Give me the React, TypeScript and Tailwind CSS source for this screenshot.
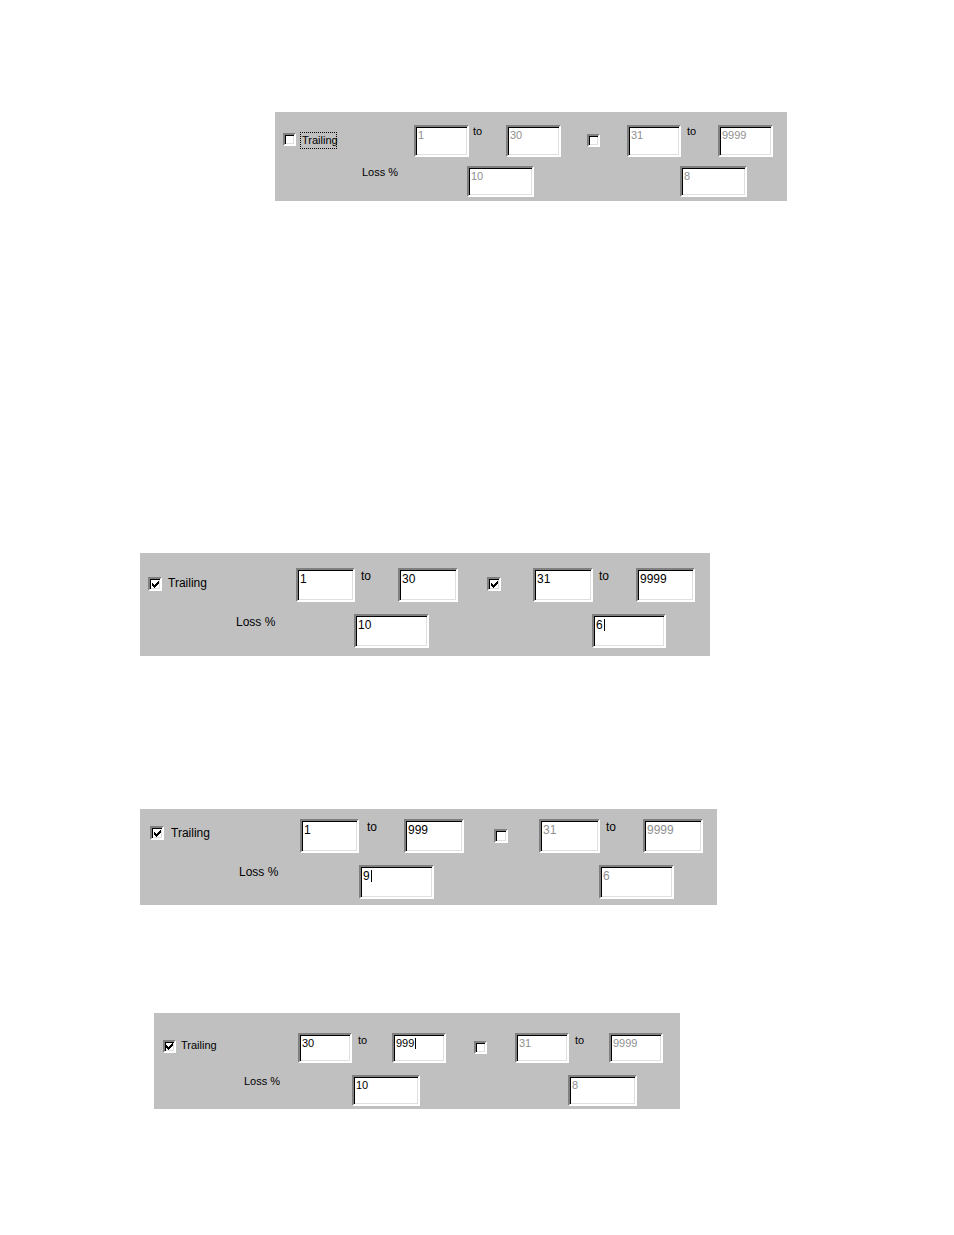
import React from "react";

const sunken =
  "border-2 border-t-[#808080] border-l-[#808080] border-b-white border-r-white shadow-[inset_1px_1px_0_#000,inset_-1px_-1px_0_#dfdfdf]";

function Check({ cls, checked }: { cls: string; checked: boolean }) {
  return (
    <div className={`shrink-0 bg-white flex items-center justify-center ${sunken} ${cls}`}>
      {checked && (
        <svg width="7" height="7" viewBox="0 0 7 7" shapeRendering="crispEdges">
          <path
            d="M6 0h1v3h-1zM5 1h1v3h-1zM4 2h1v3h-1zM3 3h1v3h-1zM2 4h1v3h-1zM1 3h1v3h-1zM0 2h1v3h-1z"
            fill="#000"
          />
        </svg>
      )}
    </div>
  );
}

function Field({
  cls,
  text,
  disabled,
  caret,
}: {
  cls: string;
  text: string;
  disabled?: boolean;
  caret?: boolean;
}) {
  return (
    <div className={`shrink-0 bg-white px-[2px] pt-[2px] ${sunken} ${cls}`}>
      <span className={`inline-flex items-center whitespace-nowrap ${disabled ? "text-[#8f8f8f]" : "text-black"}`}>
        {text}
        {caret && <span className="inline-block w-px h-[1.05em] bg-black ml-px" />}
      </span>
    </div>
  );
}

function Txt({ cls, children }: { cls: string; children: React.ReactNode }) {
  return <div className={`shrink-0 whitespace-nowrap text-black ${cls}`}>{children}</div>;
}

export default function App() {
  return (
    <div className="w-[954px] h-[1235px] bg-white overflow-hidden flex flex-col [font-family:'Liberation_Sans',Arial,sans-serif]">
      {/* Panel 1 */}
      <div className="ml-[275px] mt-[112px] w-[512px] h-[89px] bg-[#c0c0c0] flex flex-col text-[11px] leading-[13px] shrink-0">
        <div className="flex items-start h-[50px]">
          <Check cls="ml-[8px] mt-[21px] w-[13px] h-[13px]" checked={false} />
          <div className="ml-[4px] mt-[20px] w-[37px] h-[17px] border border-dotted border-black flex items-center pl-px shrink-0">
            Trailing
          </div>
          <Field cls="ml-[77px] mt-[13px] w-[55px] h-[32px]" text="1" disabled />
          <Txt cls="ml-[4px] mt-[13px] w-[10px]">to</Txt>
          <Field cls="ml-[23px] mt-[13px] w-[55px] h-[32px]" text="30" disabled />
          <Check cls="ml-[26px] mt-[22px] w-[13px] h-[13px]" checked={false} />
          <Field cls="ml-[27px] mt-[13px] w-[54px] h-[32px]" text="31" disabled />
          <Txt cls="ml-[6px] mt-[13px] w-[10px]">to</Txt>
          <Field cls="ml-[21px] mt-[13px] w-[55px] h-[32px]" text="9999" disabled />
        </div>
        <div className="flex items-start">
          <Txt cls="ml-[87px] mt-[4px] w-[36px]">Loss %</Txt>
          <Field cls="ml-[69px] mt-[4px] w-[67px] h-[31px]" text="10" disabled />
          <Field cls="ml-[146px] mt-[4px] w-[67px] h-[31px]" text="8" disabled />
        </div>
      </div>

      {/* Panel 2 */}
      <div className="ml-[140px] mt-[352px] w-[570px] h-[103px] bg-[#c0c0c0] flex flex-col text-[12px] leading-[14px] shrink-0">
        <div className="flex items-start h-[60px]">
          <Check cls="ml-[8px] mt-[24px] w-[14px] h-[14px]" checked />
          <Txt cls="ml-[6px] mt-[23px] w-[40px]">Trailing</Txt>
          <Field cls="ml-[88px] mt-[15px] w-[59px] h-[34px]" text="1" />
          <Txt cls="ml-[6px] mt-[16px] w-[11px]">to</Txt>
          <Field cls="ml-[26px] mt-[15px] w-[60px] h-[34px]" text="30" />
          <Check cls="ml-[29px] mt-[24px] w-[14px] h-[14px]" checked />
          <Field cls="ml-[32px] mt-[15px] w-[60px] h-[34px]" text="31" />
          <Txt cls="ml-[6px] mt-[16px] w-[11px]">to</Txt>
          <Field cls="ml-[26px] mt-[15px] w-[59px] h-[34px]" text="9999" />
        </div>
        <div className="flex items-start">
          <Txt cls="ml-[96px] mt-[2px] w-[40px]">Loss %</Txt>
          <Field cls="ml-[78px] mt-[1px] w-[75px] h-[34px]" text="10" />
          <Field cls="ml-[163px] mt-[1px] w-[74px] h-[34px]" text="6" caret />
        </div>
      </div>

      {/* Panel 3 */}
      <div className="ml-[140px] mt-[153px] w-[577px] h-[96px] bg-[#c0c0c0] flex flex-col text-[12px] leading-[14px] shrink-0">
        <div className="flex items-start h-[55px]">
          <Check cls="ml-[10px] mt-[17px] w-[14px] h-[14px]" checked />
          <Txt cls="ml-[7px] mt-[17px] w-[40px]">Trailing</Txt>
          <Field cls="ml-[89px] mt-[10px] w-[59px] h-[34px]" text="1" />
          <Txt cls="ml-[8px] mt-[11px] w-[11px]">to</Txt>
          <Field cls="ml-[26px] mt-[10px] w-[60px] h-[34px]" text="999" />
          <Check cls="ml-[30px] mt-[20px] w-[14px] h-[14px]" checked={false} />
          <Field cls="ml-[31px] mt-[10px] w-[61px] h-[34px]" text="31" disabled />
          <Txt cls="ml-[6px] mt-[11px] w-[11px]">to</Txt>
          <Field cls="ml-[26px] mt-[10px] w-[60px] h-[34px]" text="9999" disabled />
        </div>
        <div className="flex items-start">
          <Txt cls="ml-[99px] mt-[1px] w-[40px]">Loss %</Txt>
          <Field cls="ml-[80px] mt-[1px] w-[75px] h-[34px]" text="9" caret />
          <Field cls="ml-[165px] mt-[1px] w-[75px] h-[34px]" text="6" disabled />
        </div>
      </div>

      {/* Panel 4 */}
      <div className="ml-[154px] mt-[108px] w-[526px] h-[96px] bg-[#c0c0c0] flex flex-col text-[11px] leading-[13px] shrink-0">
        <div className="flex items-start h-[58px]">
          <Check cls="ml-[9px] mt-[27px] w-[13px] h-[13px]" checked />
          <Txt cls="ml-[5px] mt-[26px] w-[38px]">Trailing</Txt>
          <Field cls="ml-[79px] mt-[20px] w-[54px] h-[30px]" text="30" />
          <Txt cls="ml-[6px] mt-[21px] w-[10px]">to</Txt>
          <Field cls="ml-[24px] mt-[20px] w-[54px] h-[30px]" text="999" caret />
          <Check cls="ml-[28px] mt-[28px] w-[13px] h-[13px]" checked={false} />
          <Field cls="ml-[28px] mt-[20px] w-[54px] h-[30px]" text="31" disabled />
          <Txt cls="ml-[6px] mt-[21px] w-[10px]">to</Txt>
          <Field cls="ml-[24px] mt-[20px] w-[54px] h-[30px]" text="9999" disabled />
        </div>
        <div className="flex items-start">
          <Txt cls="ml-[90px] mt-[4px] w-[36px]">Loss %</Txt>
          <Field cls="ml-[72px] mt-[4px] w-[68px] h-[31px]" text="10" />
          <Field cls="ml-[148px] mt-[4px] w-[69px] h-[31px]" text="8" disabled />
        </div>
      </div>
    </div>
  );
}
